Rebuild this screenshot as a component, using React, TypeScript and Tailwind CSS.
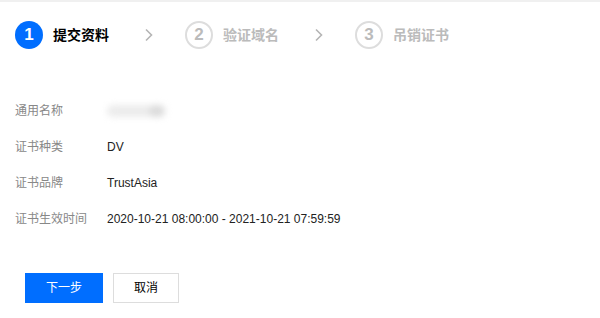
import React from "react";

const font = { fontFamily: '"Liberation Sans", Arial, "Noto Sans CJK SC", sans-serif' };

function Chevron() {
  return (
    <svg width="8" height="14" viewBox="0 0 8 14" className="ml-[36px] mr-[32px] shrink-0">
      <path d="M1 1.5 L6.5 7 L1 12.5" fill="none" stroke="#b5b5b5" strokeWidth="1.6" />
    </svg>
  );
}

function Step({ n, label, active, last }: { n: number; label: string; active?: boolean; last?: boolean }) {
  return (
    <div className="flex items-center">
      {active ? (
        <div className="w-7 h-7 rounded-full bg-[#006eff] text-white flex items-center justify-center text-[17px] font-bold">
          {n}
        </div>
      ) : (
        <div className="w-7 h-7 rounded-full border-2 border-[#dddddd] text-[#bbbbbb] flex items-center justify-center text-[17px] font-bold">
          {n}
        </div>
      )}
      <span className={`ml-[10px] text-[14px] font-bold w-[56px] whitespace-nowrap ${active ? "text-black" : "text-[#bbbbbb]"}`}>
        {label}
      </span>
      {!last && <Chevron />}
    </div>
  );
}

function Row({ label, children }: { label: string; children: React.ReactNode }) {
  return (
    <div className="flex items-center h-9 text-[12px]">
      <div className="w-[92px] text-[#888888]">{label}</div>
      <div className="text-[#222222]">{children}</div>
    </div>
  );
}

export default function App() {
  return (
    <div className="w-[600px] h-[318px] bg-white border-t-2 border-[#f0f0f0] overflow-hidden" style={font}>
      <div className="flex items-center pl-[15px] pt-[19px]">
        <Step n={1} label="提交资料" active />
        <Step n={2} label="验证域名" />
        <Step n={3} label="吊销证书" last />
      </div>
      <div className="pl-[15px] mt-[44px]">
        <Row label="通用名称">
          <div className="w-[58px] h-[12px] rounded-[6px] bg-[#ececec] blur-[3px] flex justify-end">
            <div className="w-[16px] h-[12px] rounded-full bg-[#dcdcdc]" />
          </div>
        </Row>
        <Row label="证书种类">DV</Row>
        <Row label="证书品牌">TrustAsia</Row>
        <Row label="证书生效时间">2020-10-21 08:00:00 - 2021-10-21 07:59:59</Row>
      </div>
      <div className="flex gap-[10px] pl-[25px] mt-[36px]">
        <button className="w-[78px] h-[30px] bg-[#006eff] text-white text-[12px]">下一步</button>
        <button className="w-[66px] h-[30px] border border-[#dddddd] bg-white text-black text-[12px]">取消</button>
      </div>
    </div>
  );
}
